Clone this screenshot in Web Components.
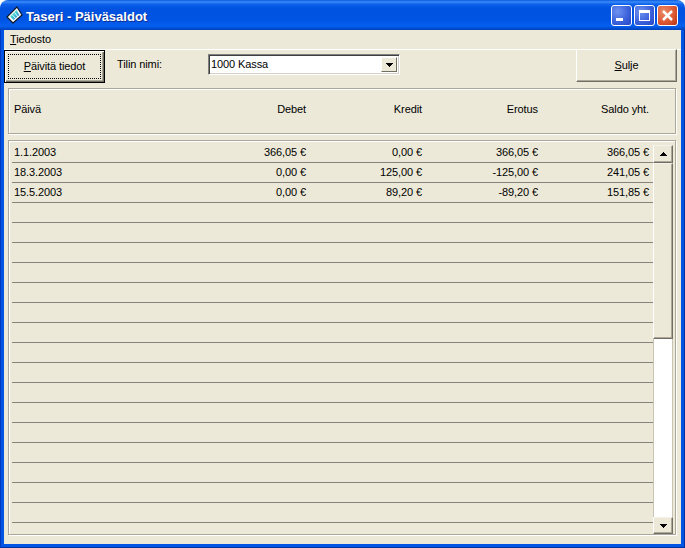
<!DOCTYPE html>
<html>
<head>
<meta charset="utf-8">
<title>Taseri - Päiväsaldot</title>
<style>
  html, body { margin: 0; padding: 0; background: #fff; }
  body { width: 685px; height: 548px; overflow: hidden; font: 11px "Liberation Sans", Arial, sans-serif; letter-spacing: -0.1px; color: #000; }
</style>
</head>
<body>
<xp-window caption="Taseri - Päiväsaldot">
  <xp-menubar><u>T</u>iedosto</xp-menubar>
  <xp-toolbar>
    <xp-button slot="left" default><u>P</u>äivitä tiedot</xp-button>
    <span slot="label">Tilin nimi:</span>
    <xp-combo slot="combo">1000 Kassa</xp-combo>
    <xp-button slot="right"><u>S</u>ulje</xp-button>
  </xp-toolbar>
  <saldo-header></saldo-header>
  <saldo-grid></saldo-grid>
</xp-window>

<script>
// columns are shared by the header and the rows
const COLUMNS = 'grid-template-columns: 176px 116px 116px 116px 111px;';

const ARROW = dir => `<svg width="7" height="4" viewBox="0 0 7 4" style="display:block">
  <path d="${dir === 'up' ? 'M3 0h1v1h1v1h1v1h1v1H0V3h1V2h1V1h1z' : 'M0 0h7v1H6v1H5v1H4v1H3V3H2V2H1V1H0z'}" fill="#000"/></svg>`;

class XpWindow extends HTMLElement {
  constructor() {
    super();
    this.attachShadow({ mode: 'open' });
    this.shadowRoot.innerHTML = `
    <style>
      :host { display: flex; flex-direction: column; width: 685px; height: 548px; box-sizing: border-box; }
      .title {
        flex: 0 0 30px; display: flex; align-items: center; box-sizing: border-box; padding: 0 7px 0 6px;
        border-radius: 8px 8px 0 0;
        background: linear-gradient(#0a5be0 0, #3c8cf8 2px, #0f63ec 4px, #0053e0 8px, #0054e4 20px, #0460f0 26px, #0048c8 29px, #0040b8 30px);
      }
      .title svg.logo { flex: none; margin-right: 3px; }
      .caption { flex: 1; color: #fff; font: bold 13px "Liberation Sans", Arial, sans-serif; letter-spacing: 0; padding-top: 2px; text-shadow: 1px 1px 0 #0f2f90; white-space: nowrap; }
      .btns { display: flex; gap: 2px; }
      .btn { width: 21px; height: 21px; box-sizing: border-box; border: 1px solid #fff; border-radius: 3px; }
      .blue { background: radial-gradient(circle at 30% 30%, #6f93f0 0, #3c62dc 55%, #2546c4 100%); }
      .red { background: radial-gradient(circle at 30% 30%, #ea8a66 0, #de5a34 55%, #b83214 100%); }
      .btn svg { display: block; }
      .frame {
        flex: 1; min-height: 0; display: flex; box-sizing: border-box; padding: 0 4px 4px;
        background: #0055e5;
        box-shadow: inset 1px 0 #0038c0, inset -1px 0 #00309c, inset 0 -1px #00309c;
      }
      .client { flex: 1; min-width: 0; display: flex; flex-direction: column; background: #ece9d8; }
    </style>
    <div class="title">
      <svg class="logo" width="17" height="20" viewBox="0 0 17 20">
        <defs><linearGradient id="g" x1="0" y1="0" x2="1" y2="1">
          <stop offset="0" stop-color="#e8f0a0"/><stop offset=".45" stop-color="#38d0d8"/><stop offset="1" stop-color="#3870d8"/>
        </linearGradient></defs>
        <path d="M1 12 L11 2 L16 10 L7 18 Z" fill="#fff" stroke="#101828" stroke-width="1.2" stroke-linejoin="round"/>
        <path d="M4 11.5 L10.5 5 L13.5 10 L7.5 15 Z" fill="url(#g)"/>
        <path d="M6 9.5 L10 14 M8.5 7.5 L12 12" stroke="#f0f8f8" stroke-width="1"/>
      </svg>
      <div class="caption"></div>
      <div class="btns">
        <div class="btn blue"><svg width="19" height="19"><rect x="4" y="12" width="7" height="3" fill="#fff"/></svg></div>
        <div class="btn blue"><svg width="19" height="19"><path d="M4 4h11v11H4z M5 7v7h9V7z" fill="#fff" fill-rule="evenodd"/></svg></div>
        <div class="btn red"><svg width="19" height="19"><path d="M5 5 L14 14 M14 5 L5 14" stroke="#fff" stroke-width="2.5"/></svg></div>
      </div>
    </div>
    <div class="frame"><div class="client"><slot></slot></div></div>`;
    this.shadowRoot.querySelector('.caption').textContent = this.getAttribute('caption');
  }
}

class XpMenubar extends HTMLElement {
  constructor() {
    super();
    this.attachShadow({ mode: 'open' });
    this.shadowRoot.innerHTML = `
    <style>
      :host { display: block; height: 19px; line-height: 18px; padding-left: 6px; box-sizing: border-box; }
    </style>
    <slot></slot>`;
  }
}

class XpToolbar extends HTMLElement {
  constructor() {
    super();
    this.attachShadow({ mode: 'open' });
    this.shadowRoot.innerHTML = `
    <style>
      :host { display: flex; align-items: flex-start; height: 39px; box-sizing: border-box; border-top: 1px solid #fff; }
      .label { margin: 7px 0 0 12px; width: 91px; line-height: 14px; }
      .combo { margin-top: 4px; }
      .right { margin: -1px 4px 0 auto; }
    </style>
    <div><slot name="left"></slot></div>
    <div class="label"><slot name="label"></slot></div>
    <div class="combo"><slot name="combo"></slot></div>
    <div class="right"><slot name="right"></slot></div>`;
  }
}

class XpButton extends HTMLElement {
  constructor() {
    super();
    this.attachShadow({ mode: 'open' });
    this.shadowRoot.innerHTML = `
    <style>
      :host { display: block; width: 101px; height: 33px; box-sizing: border-box; background: #ece9d8;
        border: 1px solid; border-color: #fff #716f64 #716f64 #fff; box-shadow: inset -1px -1px 0 #aca899; }
      :host([default]) { border: 1px solid #000; box-shadow: inset 1px 1px 0 #fff, inset -1px -1px 0 #716f64, inset -2px -2px 0 #aca899; }
      .face { height: 100%; display: flex; align-items: center; justify-content: center; box-sizing: border-box; padding-bottom: 1px; }
      :host([default]) .face { margin: 4px; height: calc(100% - 8px); outline: 1px dotted #000; padding-bottom: 2px; }
    </style>
    <div class="face"><span><slot></slot></span></div>`;
  }
}

class XpCombo extends HTMLElement {
  constructor() {
    super();
    this.attachShadow({ mode: 'open' });
    this.shadowRoot.innerHTML = `
    <style>
      :host { display: block; width: 192px; height: 21px; box-sizing: border-box; background: #fff;
        border: 1px solid; border-color: #808080 #fff #fff #808080; box-shadow: inset 1px 1px 0 #404040, inset -1px -1px 0 #d4d0c8; }
      .in { display: flex; height: 100%; padding: 2px; box-sizing: border-box; }
      .txt { flex: 1; line-height: 15px; }
      .drop { width: 16px; box-sizing: border-box; display: flex; align-items: center; justify-content: center; background: #ece9d8;
        border: 1px solid; border-color: #fff #716f64 #716f64 #fff; }
    </style>
    <div class="in"><div class="txt"><slot></slot></div><div class="drop">${ARROW('down')}</div></div>`;
  }
}

class SaldoHeader extends HTMLElement {
  constructor() {
    super();
    this.attachShadow({ mode: 'open' });
    this.shadowRoot.innerHTML = `
    <style>
      :host { display: block; height: 46px; margin: 0 5px 0 4px; box-sizing: border-box;
        border: 1px solid #aca899; box-shadow: inset 1px 1px 0 #fff, 1px 1px 0 #fff; }
      .cols { display: grid; ${COLUMNS} padding: 13px 0 0 5px; line-height: 14px; }
      .cols span { text-align: right; }
      .cols span:first-child { text-align: left; }
    </style>
    <div class="cols"><span>Päivä</span><span>Debet</span><span>Kredit</span><span>Erotus</span><span>Saldo yht.</span></div>`;
  }
}

class SaldoRow extends HTMLElement {
  constructor() {
    super();
    this.attachShadow({ mode: 'open' });
    this.shadowRoot.innerHTML = `
    <style>
      :host { display: grid; ${COLUMNS} height: 20px; box-sizing: border-box; border-bottom: 1px solid #85847d; line-height: 18px; padding-left: 2px; }
      ::slotted(span) { text-align: right; }
      ::slotted(span:first-child) { text-align: left; }
    </style>
    <slot></slot>`;
  }
}

class XpScrollbar extends HTMLElement {
  constructor() {
    super();
    this.attachShadow({ mode: 'open' });
    this.shadowRoot.innerHTML = `
    <style>
      :host { display: flex; flex-direction: column; width: 20px; flex: none; background: #fff; box-sizing: border-box; }
      .b { box-sizing: border-box; background: #ece9d8; border: 1px solid; border-color: #f4f2e8 #716f64 #716f64 #fff;
        box-shadow: inset -1px -1px 0 #aca899; display: flex; align-items: center; justify-content: center; }
      .up { height: 18px; }
      .thumb { height: 176px; }
      .track { flex: 1; border-left: 1px solid #c8c5b4; border-right: 1px solid #c8c5b4; }
      .down { height: 17px; }
    </style>
    <div class="b up">${ARROW('up')}</div>
    <div class="b thumb"></div>
    <div class="track"></div>
    <div class="b down">${ARROW('down')}</div>`;
  }
}

class SaldoGrid extends HTMLElement {
  constructor() {
    super();
    this.attachShadow({ mode: 'open' });
    this.shadowRoot.innerHTML = `
    <style>
      :host { display: flex; flex: 1; min-height: 0; margin: 6px 5px 9px 4px; box-sizing: border-box; padding: 4px 3px 0 3px;
        border: 1px solid #aca899; box-shadow: inset 1px 1px 0 #fff, 1px 1px 0 #fff; }
      .rows { flex: none; width: 641px; overflow: hidden; margin-top: -2px; }
    </style>
    <div class="rows"></div>
    <xp-scrollbar></xp-scrollbar>`;
    const data = [
      ['1.1.2003', '366,05 €', '0,00 €', '366,05 €', '366,05 €'],
      ['18.3.2003', '0,00 €', '125,00 €', '-125,00 €', '241,05 €'],
      ['15.5.2003', '0,00 €', '89,20 €', '-89,20 €', '151,85 €'],
    ];
    const rows = this.shadowRoot.querySelector('.rows');
    for (let i = 0; i < 19; i++) {
      const row = document.createElement('saldo-row');
      (data[i] || ['', '', '', '', '']).forEach(t => {
        const s = document.createElement('span');
        s.textContent = t;
        row.append(s);
      });
      rows.append(row);
    }
  }
}

customElements.define('xp-window', XpWindow);
customElements.define('xp-menubar', XpMenubar);
customElements.define('xp-toolbar', XpToolbar);
customElements.define('xp-button', XpButton);
customElements.define('xp-combo', XpCombo);
customElements.define('saldo-header', SaldoHeader);
customElements.define('saldo-row', SaldoRow);
customElements.define('xp-scrollbar', XpScrollbar);
customElements.define('saldo-grid', SaldoGrid);
</script>
</body>
</html>
